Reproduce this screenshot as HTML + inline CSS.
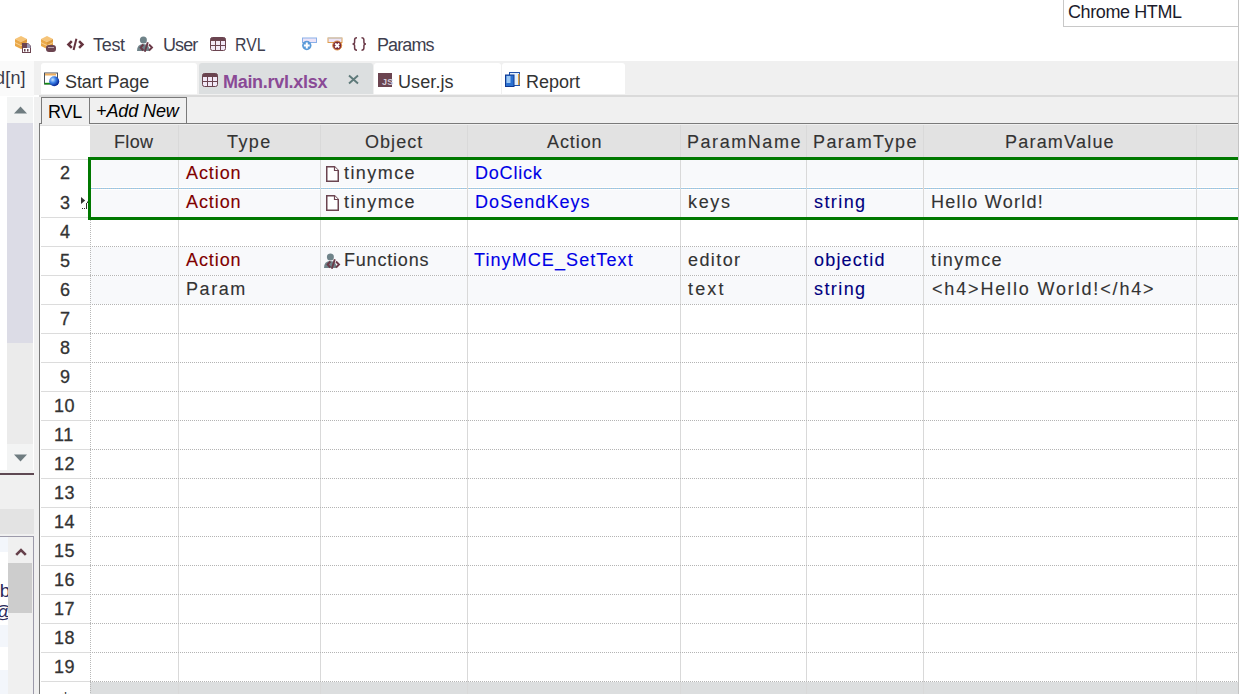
<!DOCTYPE html>
<html><head><meta charset="utf-8">
<style>
*{margin:0;padding:0;box-sizing:border-box}
html,body{width:1239px;height:694px;overflow:hidden;background:#fff;position:relative;font-family:"Liberation Sans",sans-serif}
.a{position:absolute}
.t{position:absolute;font-size:18px;line-height:20px;white-space:pre}
.g{color:#333}
.gt{-webkit-text-stroke:0.12px currentColor}
.ui{color:#3e3e4e}
.red{color:#800000}
.blu{color:#0000e6}
.nav{color:#000080}
svg{position:absolute;overflow:visible}
</style></head><body>

<div class="a" style="left:0;top:0;width:34px;height:96px;background:#fafafa"></div>
<div class="a" style="left:0;top:0;width:1239px;height:61px;background:#fff"></div>
<div class="a" style="left:1063px;top:-1px;width:176px;height:28px;border:1px solid #c8c8c8;background:#fff"></div>
<div class="t ui" style="left:1068px;top:2px;letter-spacing:-0.4px;color:#1c1c2c">Chrome HTML</div>
<svg style="left:14px;top:35px" width="14" height="15" viewBox="0 0 14 15">
<path d="M7 1 L13 4 L7 7 L1 4 Z" fill="#f6c478"/>
<path d="M1 4 L7 7 L7 14 L1 11 Z" fill="#eaa848"/>
<path d="M7 7 L13 4 L13 11 L7 14 Z" fill="#dc9a3c"/>
<path d="M1 7.6 L7 10.6 L13 7.6" stroke="#f8d498" stroke-width="0.9" fill="none"/>
</svg>
<svg style="left:22px;top:43px" width="9" height="10" viewBox="0 0 9 10"><path d="M0 0 H6 L9 3 V10 H0 Z" fill="#6b4450"/><path d="M5 0.5 H6 L8.5 3 V5 H5 Z" fill="#9a9ab8"/><rect x="1" y="5" width="7" height="4" fill="#fff"/><rect x="2" y="6" width="1.5" height="2.5" fill="#6b4450"/><rect x="5" y="6" width="1.5" height="2.5" fill="#6b4450"/></svg>
<svg style="left:40px;top:35px" width="14" height="15" viewBox="0 0 14 15">
<path d="M7 1 L13 4 L7 7 L1 4 Z" fill="#f6c478"/>
<path d="M1 4 L7 7 L7 14 L1 11 Z" fill="#eaa848"/>
<path d="M7 7 L13 4 L13 11 L7 14 Z" fill="#dc9a3c"/>
<path d="M1 7.6 L7 10.6 L13 7.6" stroke="#f8d498" stroke-width="0.9" fill="none"/>
</svg>
<svg style="left:46px;top:45px" width="10" height="7" viewBox="0 0 10 7"><rect x="0" y="0" width="10" height="7" rx="3" fill="#6b4450"/><rect x="2" y="2" width="6" height="1" fill="#b7a0aa"/></svg>
<svg style="left:67px;top:38px" width="17" height="13" viewBox="0 0 17 13"><path d="M4.8 3.1 L1.4 6.5 L4.8 9.9 M12.1 3.1 L15.5 6.5 L12.1 9.9" stroke="#65343f" stroke-width="2.5" fill="none"/><path d="M9.4 0.8 L6.6 12" stroke="#65343f" stroke-width="2"/></svg>
<div class="t ui" style="left:93px;top:35px;letter-spacing:-0.3px;">Test</div>
<svg style="left:135px;top:35px" width="19" height="18" viewBox="0 0 19 18"><circle cx="8.4" cy="4.9" r="3.5" fill="#6f8389"/><path d="M2 16 Q2 9 8.4 9 Q14.5 9 14.5 16 Z" fill="#6f8389"/><path d="M8.3 9.5 L5.6 12.5 L8.3 15.5 M14 9.5 L17 12.5 L14 15.5" stroke="#6b3a48" stroke-width="1.9" fill="none"/><path d="M12.8 7.2 L9.8 16.8" stroke="#6b3a48" stroke-width="1.9"/></svg>
<div class="t ui" style="left:163px;top:35px;letter-spacing:-0.9px;">User</div>
<svg style="left:210px;top:37px" width="16" height="14" viewBox="0 0 16 14">
<rect x="0.5" y="0.5" width="15" height="13" rx="2" fill="#f2e8f6" stroke="#6b4450" stroke-width="1"/>
<path d="M0.5 2.5 Q0.5 0.5 2.5 0.5 H13.5 Q15.5 0.5 15.5 2.5 V4 H0.5 Z" fill="#6b4450"/>
<path d="M5.5 4 V13.5 M10.5 4 V13.5 M0.5 8.5 H15.5" stroke="#6b4450" stroke-width="1"/>
</svg>
<div class="t ui" style="left:235px;top:35px;letter-spacing:0px;transform:scaleX(0.88);transform-origin:0 0">RVL</div>
<svg style="left:301px;top:37px" width="17" height="14" viewBox="0 0 17 14"><rect x="1.5" y="1" width="14" height="4.5" fill="#ece4f8" stroke="#8ab0e8"/><circle cx="5.8" cy="8.5" r="4.7" fill="#5a9ad8"/><path d="M5.8 5.6 V11.4 M2.9 8.5 H8.7" stroke="#fff" stroke-width="2"/></svg>
<svg style="left:327px;top:37px" width="17" height="14" viewBox="0 0 17 14"><rect x="1" y="1" width="14" height="4.5" fill="#ece4f8" stroke="#e0a050"/><rect x="1" y="0.5" width="14" height="1.2" fill="#c8c8c8"/><circle cx="10.2" cy="8.5" r="4.5" fill="#7a2a38" stroke="#e09040" stroke-width="1"/><path d="M8.2 6.5 L12.2 10.5 M12.2 6.5 L8.2 10.5" stroke="#fff" stroke-width="1.8"/></svg>
<svg style="left:351px;top:37px" width="17" height="14" viewBox="0 0 17 14"><path d="M6 0.8 Q3.6 0.8 3.6 3 V5.2 Q3.6 7 1.5 7 Q3.6 7 3.6 8.8 V11 Q3.6 13.2 6 13.2 M10.5 0.8 Q12.9 0.8 12.9 3 V5.2 Q12.9 7 15 7 Q12.9 7 12.9 8.8 V11 Q12.9 13.2 10.5 13.2" stroke="#6b3a48" stroke-width="1.5" fill="none"/></svg>
<div class="t ui" style="left:377px;top:35px;letter-spacing:-0.9px;">Params</div>
<div class="a" style="left:0;top:61px;width:34px;height:35px;background:#fafafa"></div>
<div class="t ui" style="left:-5px;top:68px;letter-spacing:0.2px;color:#3a3a4a">d[n]</div>
<div class="a" style="left:34px;top:61px;width:1205px;height:34px;background:#f0f0f0"></div>
<div class="a" style="left:39px;top:95px;width:1200px;height:2px;background:#dadada"></div>
<div class="a" style="left:34px;top:97px;width:5px;height:597px;background:#f0f0f0"></div>
<div class="a" style="left:41px;top:63px;width:156px;height:31px;background:#fff;border-radius:3px 3px 0 0"></div>
<div class="a" style="left:199px;top:63px;width:174px;height:31px;background:#dcdfe0;border-radius:3px 3px 0 0"></div>
<div class="a" style="left:374px;top:63px;width:127px;height:31px;background:#fff;border-radius:3px 3px 0 0"></div>
<div class="a" style="left:502px;top:63px;width:123px;height:31px;background:#fff;border-radius:3px 3px 0 0"></div>
<svg style="left:44px;top:72px" width="17" height="15" viewBox="0 0 17 15"><defs><radialGradient id="gl" cx="0.35" cy="0.35" r="0.7"><stop offset="0" stop-color="#c8e4ff"/><stop offset="0.45" stop-color="#3a80e8"/><stop offset="1" stop-color="#001a8a"/></radialGradient></defs><rect x="0.5" y="1" width="13" height="11" fill="#fff" stroke="#48505a"/><rect x="1" y="1.5" width="11" height="2" fill="#f0b060"/><rect x="0.5" y="10.8" width="7" height="1.6" fill="#109010"/><circle cx="10.2" cy="9.2" r="5" fill="url(#gl)"/></svg>
<div class="t g" style="left:65px;top:72px;letter-spacing:-0.1px;">Start Page</div>
<svg style="left:202px;top:73px" width="16" height="14" viewBox="0 0 16 14">
<rect x="0.5" y="0.5" width="15" height="13" rx="2" fill="#f2e8f6" stroke="#6b4450" stroke-width="1"/>
<path d="M0.5 2.5 Q0.5 0.5 2.5 0.5 H13.5 Q15.5 0.5 15.5 2.5 V4 H0.5 Z" fill="#6b4450"/>
<path d="M5.5 4 V13.5 M10.5 4 V13.5 M0.5 8.5 H15.5" stroke="#6b4450" stroke-width="1"/>
</svg>
<div class="t " style="left:223px;top:72px;letter-spacing:-0.3px;color:#8a4a96;font-weight:bold">Main.rvl.xlsx</div>
<svg style="left:348px;top:75px" width="11" height="9" viewBox="0 0 11 9"><path d="M1 0.5 L10 8.5 M10 0.5 L1 8.5" stroke="#5f7a7a" stroke-width="1.9"/></svg>
<div class="a" style="left:378px;top:73px;width:14px;height:14px;background:#6b4450"></div><div class="a" style="left:382px;top:78px;font-size:9px;line-height:9px;color:#d4ccd8;font-weight:bold;letter-spacing:0.3px">JS</div>
<div class="t g" style="left:398px;top:72px;letter-spacing:0.1px;">User.js</div>
<svg style="left:505px;top:72px" width="16" height="15" viewBox="0 0 16 15"><rect x="4.5" y="0.5" width="10" height="13" fill="#e4f0fc" stroke="#2050a8"/><rect x="13" y="2" width="1.5" height="11" fill="#e0a040"/><rect x="0.5" y="3" width="8.5" height="11.5" fill="#2a70d0" stroke="#103890"/><rect x="1.5" y="4" width="4" height="7" fill="#9cc8f4"/></svg>
<div class="t g" style="left:526px;top:72px;letter-spacing:0px;">Report</div>
<div class="a" style="left:39px;top:97px;width:1200px;height:26px;background:#f0f0f0"></div>
<div class="a" style="left:89px;top:123px;width:1150px;height:1px;background:#7a7a7a"></div>
<div class="a" style="left:41px;top:97px;width:49px;height:27px;border:1px solid #7a7a7a;border-bottom:none;background:#f0f0f0"></div>
<div class="a" style="left:89px;top:97px;width:98px;height:27px;border:1px solid #7a7a7a;background:#f0f0f0"></div>
<div class="a" style="left:39px;top:123px;width:3px;height:1px;background:#7a7a7a"></div>
<div class="t " style="left:48px;top:102px;letter-spacing:-0.2px;color:#000">RVL</div>
<div class="t " style="left:96px;top:101px;letter-spacing:-0.1px;color:#000;font-style:italic">+Add New</div>
<div class="a" style="left:0;top:96px;width:34px;height:378px;background:#fff"></div>
<div class="a" style="left:7px;top:97px;width:26px;height:26px;background:#f3f4f4"></div>
<svg style="left:14px;top:106px" width="13" height="8" viewBox="0 0 13 8"><path d="M0 7.5 L6.5 0.5 L13 7.5 Z" fill="#6f7c80"/></svg>
<div class="a" style="left:7px;top:123px;width:26px;height:220px;background:#dcdce6"></div>
<div class="a" style="left:7px;top:343px;width:26px;height:101px;background:#ebebeb"></div>
<div class="a" style="left:7px;top:444px;width:26px;height:26px;background:#f3f4f4"></div>
<svg style="left:14px;top:454px" width="13" height="8" viewBox="0 0 13 8"><path d="M0 0.5 L6.5 7.5 L13 0.5 Z" fill="#6f7c80"/></svg>
<div class="a" style="left:0;top:470px;width:34px;height:3px;background:#f0f0f0"></div>
<div class="a" style="left:0;top:473px;width:34px;height:2px;background:#5e4852"></div>
<div class="a" style="left:0;top:475px;width:34px;height:34px;background:#f0f0f0"></div>
<div class="a" style="left:0;top:509px;width:34px;height:25px;background:#e3e3e3"></div>
<div class="a" style="left:0;top:534px;width:34px;height:2px;background:#f0f0f0"></div>
<div class="a" style="left:0;top:536px;width:34px;height:158px;background:#fff;border-top:1px solid #9c9aaa;border-right:1px solid #9c9aaa"></div>
<div class="a" style="left:0;top:537px;width:8px;height:15px;background:#f3f6fb"></div>
<div class="a" style="left:0;top:552px;width:8px;height:73px;background:#fff"></div>
<div class="a" style="left:0;top:625px;width:8px;height:22px;background:#f3f6fb"></div>
<div class="a" style="left:0;top:647px;width:8px;height:23px;background:#fff"></div>
<div class="a" style="left:0;top:670px;width:8px;height:24px;background:#f3f6fb"></div>
<div class="t" style="left:-4px;top:581px;color:#2a2a5a;font-size:19px">'b</div>
<div class="t" style="left:-6px;top:602px;color:#2a2a5a;text-decoration:underline">@</div>
<div class="a" style="left:8px;top:537px;width:25px;height:157px;background:#f0f0f0"></div>
<svg style="left:15px;top:548px" width="12" height="8" viewBox="0 0 12 8"><path d="M1.2 6.8 L6 2 L10.8 6.8" stroke="#65404a" stroke-width="2.6" fill="none"/></svg>
<div class="a" style="left:8px;top:563px;width:24px;height:50px;background:#cdcdcd"></div>
<div class="a" style="left:39px;top:123px;width:1px;height:571px;background:#7a7a7a"></div>
<div class="a" style="left:40px;top:124px;width:1198px;height:570px;background:#fff"></div>
<div class="a" style="left:40px;top:124px;width:1198px;height:1px;background:#f0f0f0"></div>
<div class="a" style="left:40px;top:125px;width:50px;height:1px;background:#e0e0e0"></div>
<div class="a" style="left:90px;top:125px;width:1148px;height:32px;background:#e2e2e2"></div>
<div class="a" style="left:90px;top:160px;width:1148px;height:28px;background:#f8f9fb"></div>
<div class="a" style="left:90px;top:189px;width:1148px;height:28px;background:#f8f9fb"></div>
<div class="a" style="left:90px;top:247px;width:1148px;height:28px;background:#f8f9fb"></div>
<div class="a" style="left:90px;top:276px;width:1148px;height:28px;background:#f8f9fb"></div>
<div class="a" style="left:90px;top:682px;width:1148px;height:12px;background:#dcdedf"></div>
<div class="a" style="left:90px;top:187px;width:1148px;height:3px;background:#fff"></div>
<div class="a" style="left:90px;top:188px;width:1148px;height:1px;background-image:linear-gradient(90deg,#c4c4c4 50%,#84c8f6 50%);background-size:2px 1px"></div>
<div class="a" style="left:178px;top:125px;width:1px;height:569px;background:#d9d9d9"></div>
<div class="a" style="left:320px;top:125px;width:1px;height:569px;background:#d9d9d9"></div>
<div class="a" style="left:467px;top:125px;width:1px;height:569px;background:#d9d9d9"></div>
<div class="a" style="left:680px;top:125px;width:1px;height:569px;background:#d9d9d9"></div>
<div class="a" style="left:806px;top:125px;width:1px;height:569px;background:#d9d9d9"></div>
<div class="a" style="left:923px;top:125px;width:1px;height:569px;background:#d9d9d9"></div>
<div class="a" style="left:1196px;top:125px;width:1px;height:569px;background:#d9d9d9"></div>
<div class="a" style="left:90px;top:158px;width:1px;height:536px;background-image:linear-gradient(#b8b8b8 50%,transparent 50%);background-size:1px 2px"></div>
<div class="a" style="left:41px;top:159px;width:49px;height:1px;background:#dcdcdc"></div>
<div class="a" style="left:41px;top:217px;width:49px;height:1px;background:#dcdcdc"></div>
<div class="a" style="left:90px;top:217px;width:1148px;height:1px;background-image:linear-gradient(90deg,#b4b4b4 50%,transparent 50%);background-size:2px 1px"></div>
<div class="a" style="left:41px;top:246px;width:49px;height:1px;background:#dcdcdc"></div>
<div class="a" style="left:90px;top:246px;width:1148px;height:1px;background-image:linear-gradient(90deg,#b4b4b4 50%,transparent 50%);background-size:2px 1px"></div>
<div class="a" style="left:41px;top:275px;width:49px;height:1px;background:#dcdcdc"></div>
<div class="a" style="left:90px;top:275px;width:1148px;height:1px;background-image:linear-gradient(90deg,#b4b4b4 50%,transparent 50%);background-size:2px 1px"></div>
<div class="a" style="left:41px;top:304px;width:49px;height:1px;background:#dcdcdc"></div>
<div class="a" style="left:90px;top:304px;width:1148px;height:1px;background-image:linear-gradient(90deg,#b4b4b4 50%,transparent 50%);background-size:2px 1px"></div>
<div class="a" style="left:41px;top:333px;width:49px;height:1px;background:#dcdcdc"></div>
<div class="a" style="left:90px;top:333px;width:1148px;height:1px;background-image:linear-gradient(90deg,#b4b4b4 50%,transparent 50%);background-size:2px 1px"></div>
<div class="a" style="left:41px;top:362px;width:49px;height:1px;background:#dcdcdc"></div>
<div class="a" style="left:90px;top:362px;width:1148px;height:1px;background-image:linear-gradient(90deg,#b4b4b4 50%,transparent 50%);background-size:2px 1px"></div>
<div class="a" style="left:41px;top:391px;width:49px;height:1px;background:#dcdcdc"></div>
<div class="a" style="left:90px;top:391px;width:1148px;height:1px;background-image:linear-gradient(90deg,#b4b4b4 50%,transparent 50%);background-size:2px 1px"></div>
<div class="a" style="left:41px;top:420px;width:49px;height:1px;background:#dcdcdc"></div>
<div class="a" style="left:90px;top:420px;width:1148px;height:1px;background-image:linear-gradient(90deg,#b4b4b4 50%,transparent 50%);background-size:2px 1px"></div>
<div class="a" style="left:41px;top:449px;width:49px;height:1px;background:#dcdcdc"></div>
<div class="a" style="left:90px;top:449px;width:1148px;height:1px;background-image:linear-gradient(90deg,#b4b4b4 50%,transparent 50%);background-size:2px 1px"></div>
<div class="a" style="left:41px;top:478px;width:49px;height:1px;background:#dcdcdc"></div>
<div class="a" style="left:90px;top:478px;width:1148px;height:1px;background-image:linear-gradient(90deg,#b4b4b4 50%,transparent 50%);background-size:2px 1px"></div>
<div class="a" style="left:41px;top:507px;width:49px;height:1px;background:#dcdcdc"></div>
<div class="a" style="left:90px;top:507px;width:1148px;height:1px;background-image:linear-gradient(90deg,#b4b4b4 50%,transparent 50%);background-size:2px 1px"></div>
<div class="a" style="left:41px;top:536px;width:49px;height:1px;background:#dcdcdc"></div>
<div class="a" style="left:90px;top:536px;width:1148px;height:1px;background-image:linear-gradient(90deg,#b4b4b4 50%,transparent 50%);background-size:2px 1px"></div>
<div class="a" style="left:41px;top:565px;width:49px;height:1px;background:#dcdcdc"></div>
<div class="a" style="left:90px;top:565px;width:1148px;height:1px;background-image:linear-gradient(90deg,#b4b4b4 50%,transparent 50%);background-size:2px 1px"></div>
<div class="a" style="left:41px;top:594px;width:49px;height:1px;background:#dcdcdc"></div>
<div class="a" style="left:90px;top:594px;width:1148px;height:1px;background-image:linear-gradient(90deg,#b4b4b4 50%,transparent 50%);background-size:2px 1px"></div>
<div class="a" style="left:41px;top:623px;width:49px;height:1px;background:#dcdcdc"></div>
<div class="a" style="left:90px;top:623px;width:1148px;height:1px;background-image:linear-gradient(90deg,#b4b4b4 50%,transparent 50%);background-size:2px 1px"></div>
<div class="a" style="left:41px;top:652px;width:49px;height:1px;background:#dcdcdc"></div>
<div class="a" style="left:90px;top:652px;width:1148px;height:1px;background-image:linear-gradient(90deg,#b4b4b4 50%,transparent 50%);background-size:2px 1px"></div>
<div class="a" style="left:41px;top:681px;width:49px;height:1px;background:#dcdcdc"></div>
<div class="a" style="left:90px;top:681px;width:1148px;height:1px;background-image:linear-gradient(90deg,#b4b4b4 50%,transparent 50%);background-size:2px 1px"></div>
<div class="t g gt" style="left:114px;top:132px;letter-spacing:0.33px;">Flow</div>
<div class="t g gt" style="left:227px;top:132px;letter-spacing:1.43px;">Type</div>
<div class="t g gt" style="left:365px;top:132px;letter-spacing:1.04px;">Object</div>
<div class="t g gt" style="left:547px;top:132px;letter-spacing:0.92px;">Action</div>
<div class="t g gt" style="left:687px;top:132px;letter-spacing:1.55px;">ParamName</div>
<div class="t g gt" style="left:813px;top:132px;letter-spacing:1.42px;">ParamType</div>
<div class="t g gt" style="left:1005px;top:132px;letter-spacing:1.21px;">ParamValue</div>
<div class="t g gt" style="left:60px;top:163px;letter-spacing:0px;-webkit-text-stroke:0.3px #333">2</div>
<div class="t g gt" style="left:60px;top:193px;letter-spacing:0px;-webkit-text-stroke:0.3px #333">3</div>
<div class="t g gt" style="left:60px;top:222px;letter-spacing:0px;-webkit-text-stroke:0.3px #333">4</div>
<div class="t g gt" style="left:60px;top:251px;letter-spacing:0px;-webkit-text-stroke:0.3px #333">5</div>
<div class="t g gt" style="left:60px;top:280px;letter-spacing:0px;-webkit-text-stroke:0.3px #333">6</div>
<div class="t g gt" style="left:60px;top:309px;letter-spacing:0px;-webkit-text-stroke:0.3px #333">7</div>
<div class="t g gt" style="left:60px;top:338px;letter-spacing:0px;-webkit-text-stroke:0.3px #333">8</div>
<div class="t g gt" style="left:60px;top:367px;letter-spacing:0px;-webkit-text-stroke:0.3px #333">9</div>
<div class="t g gt" style="left:54px;top:396px;letter-spacing:0.6px;-webkit-text-stroke:0.3px #333">10</div>
<div class="t g gt" style="left:54px;top:425px;letter-spacing:0.6px;-webkit-text-stroke:0.3px #333">11</div>
<div class="t g gt" style="left:54px;top:454px;letter-spacing:0.6px;-webkit-text-stroke:0.3px #333">12</div>
<div class="t g gt" style="left:54px;top:483px;letter-spacing:0.6px;-webkit-text-stroke:0.3px #333">13</div>
<div class="t g gt" style="left:54px;top:512px;letter-spacing:0.6px;-webkit-text-stroke:0.3px #333">14</div>
<div class="t g gt" style="left:54px;top:541px;letter-spacing:0.6px;-webkit-text-stroke:0.3px #333">15</div>
<div class="t g gt" style="left:54px;top:570px;letter-spacing:0.6px;-webkit-text-stroke:0.3px #333">16</div>
<div class="t g gt" style="left:54px;top:599px;letter-spacing:0.6px;-webkit-text-stroke:0.3px #333">17</div>
<div class="t g gt" style="left:54px;top:628px;letter-spacing:0.6px;-webkit-text-stroke:0.3px #333">18</div>
<div class="t g gt" style="left:54px;top:657px;letter-spacing:0.6px;-webkit-text-stroke:0.3px #333">19</div>
<div class="t g" style="left:62px;top:689px">*</div>
<div class="t red gt" style="left:186px;top:163px;letter-spacing:0.92px;">Action</div>
<div class="t red gt" style="left:186px;top:192px;letter-spacing:0.92px;">Action</div>
<div class="t red gt" style="left:186px;top:250px;letter-spacing:0.92px;">Action</div>
<div class="t g gt" style="left:186px;top:279px;letter-spacing:1.57px;">Param</div>
<svg style="left:326px;top:166px" width="13" height="16" viewBox="0 0 13 16"><path d="M0.75 0.75 H8.5 L12.25 4.5 V15.25 H0.75 Z" fill="#fff" stroke="#6b4450" stroke-width="1.5"/><path d="M8.5 0.75 V4.5 H12.25" fill="#fff" stroke="#6b4450" stroke-width="1.2"/></svg>
<svg style="left:326px;top:195px" width="13" height="16" viewBox="0 0 13 16"><path d="M0.75 0.75 H8.5 L12.25 4.5 V15.25 H0.75 Z" fill="#fff" stroke="#6b4450" stroke-width="1.5"/><path d="M8.5 0.75 V4.5 H12.25" fill="#fff" stroke="#6b4450" stroke-width="1.2"/></svg>
<div class="t g gt" style="left:344px;top:163px;letter-spacing:1.43px;">tinymce</div>
<div class="t g gt" style="left:344px;top:192px;letter-spacing:1.43px;">tinymce</div>
<svg style="left:322px;top:252px" width="19" height="18" viewBox="0 0 19 18"><circle cx="8.4" cy="4.9" r="3.5" fill="#6f8389"/><path d="M2 16 Q2 9 8.4 9 Q14.5 9 14.5 16 Z" fill="#6f8389"/><path d="M8.3 9.5 L5.6 12.5 L8.3 15.5 M14 9.5 L17 12.5 L14 15.5" stroke="#6b3a48" stroke-width="1.9" fill="none"/><path d="M12.8 7.2 L9.8 16.8" stroke="#6b3a48" stroke-width="1.9"/></svg>
<div class="t g gt" style="left:344px;top:250px;letter-spacing:0.8px;">Functions</div>
<div class="t blu gt" style="left:475px;top:163px;letter-spacing:0.8px;">DoClick</div>
<div class="t blu gt" style="left:475px;top:192px;letter-spacing:1.06px;">DoSendKeys</div>
<div class="t blu gt" style="left:474px;top:250px;letter-spacing:1.09px;">TinyMCE_SetText</div>
<div class="t g gt" style="left:688px;top:192px;letter-spacing:1.66px;">keys</div>
<div class="t g gt" style="left:688px;top:250px;letter-spacing:1.41px;">editor</div>
<div class="t g gt" style="left:688px;top:279px;letter-spacing:2.16px;">text</div>
<div class="t nav gt" style="left:814px;top:192px;letter-spacing:1.42px;">string</div>
<div class="t nav gt" style="left:814px;top:250px;letter-spacing:1.2px;">objectid</div>
<div class="t nav gt" style="left:814px;top:279px;letter-spacing:1.42px;">string</div>
<div class="t g gt" style="left:931px;top:192px;letter-spacing:1.28px;">Hello World!</div>
<div class="t g gt" style="left:931px;top:250px;letter-spacing:1.43px;">tinymce</div>
<div class="t g gt" style="left:932px;top:279px;letter-spacing:1.84px;">&lt;h4&gt;Hello World!&lt;/h4&gt;</div>
<div class="a" style="left:88px;top:157px;width:1152px;height:63px;border:3px solid #007800;border-right:none"></div>
<svg style="left:81px;top:197px" width="8" height="13" viewBox="0 0 8 13"><path d="M0 0 L4.2 3.4 L0 6.9 Z" fill="#333"/><rect x="1" y="11" width="1" height="1" fill="#333"/><rect x="3" y="11" width="1" height="1" fill="#333"/><path d="M5.5 6 V12 M6.5 4.5 V6" stroke="#333" stroke-width="1"/></svg>
<div class="a" style="left:1238px;top:0;width:1px;height:694px;background:#c4c4c4"></div>
</body></html>
